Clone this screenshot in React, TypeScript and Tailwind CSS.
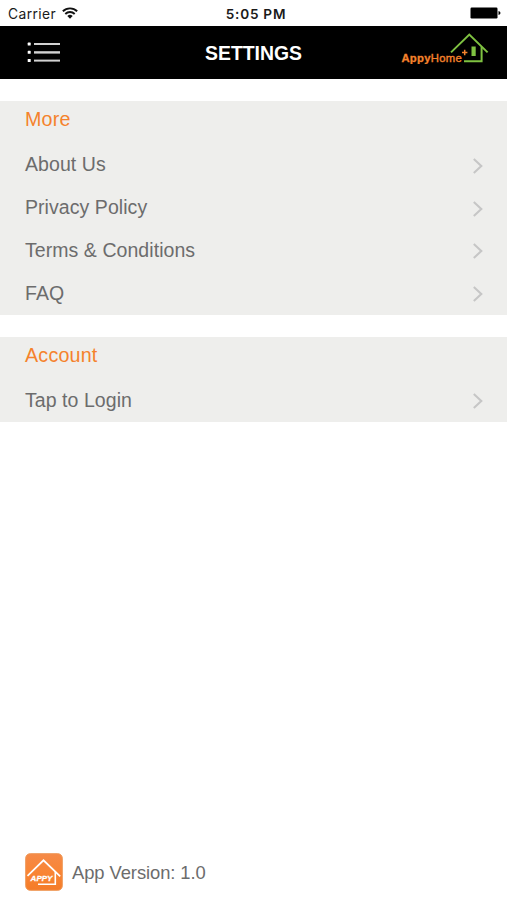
import React from "react";

function Chevron() {
  return (
    <svg className="mt-[2px] h-4 w-3" viewBox="0 0 12 16" fill="none" stroke="#c6c6c6" strokeWidth="2.1">
      <path d="M1.8 1 L9.3 8 L1.8 15" />
    </svg>
  );
}

function Row({ label }: { label: string }) {
  return (
    <li className="flex h-[42.75px] items-center justify-between pr-[23px] pl-[25px]">
      <span className="pb-px text-[19.5px] leading-6 tracking-[0.06px] text-[#6c6c6c]">{label}</span>
      <Chevron />
    </li>
  );
}

function Section({ title, items }: { title: string; items: string[] }) {
  return (
    <section className="bg-[#eeeeec]">
      <h2 className="h-[42.5px] pt-[6px] pl-[25px] text-[19.7px] leading-6 tracking-[0.2px] text-[#f5822c]">{title}</h2>
      <ul>
        {items.map((item) => (
          <Row key={item} label={item} />
        ))}
      </ul>
    </section>
  );
}

function StatusBar() {
  return (
    <div className="grid h-[25.5px] grid-cols-3 items-center pt-[2px] text-[#1a1a1a]">
      <div className="flex items-center gap-[6px] pl-[8px]">
        <span className="font-['Inter','Liberation_Sans',sans-serif] text-[13.8px] leading-4 tracking-[0.4px]">Carrier</span>
        <svg className="mb-[2px] h-[12px] w-[16px]" viewBox="0 0 15 11" fill="none" stroke="#111" strokeWidth="1.8">
          <path d="M0.8 3.9 A9.5 9.5 0 0 1 14.2 3.9" />
          <path d="M3.1 6.4 A6.2 6.2 0 0 1 11.9 6.4" />
          <path d="M7.5 10.9 L5 8.4 A3.5 3.5 0 0 1 10 8.4 Z" fill="#111" stroke="none" />
        </svg>
      </div>
      <div className="pl-[5px] text-center font-['Inter','Liberation_Sans',sans-serif] text-[13.6px] leading-4 font-semibold tracking-[0.75px]">
        5:05 PM
      </div>
      <div className="flex justify-end pr-[6px]">
        <svg className="mb-px h-3 w-[31px]" viewBox="0 0 31 12" fill="#000">
          <rect x="0.5" y="0.5" width="27" height="11" rx="1.2" />
          <path d="M28.5 4 Q30.5 4.5 30.5 6 Q30.5 7.5 28.5 8 Z" />
        </svg>
      </div>
    </div>
  );
}

function MenuIcon() {
  return (
    <svg className="h-[22px] w-[34px]" viewBox="0 0 34 22">
      <g fill="#fff">
        <rect x="0.7" y="1.6" width="3" height="3" rx="0.6" />
        <rect x="0.7" y="9.8" width="3" height="3" rx="0.6" />
        <rect x="0.7" y="18" width="3" height="3" rx="0.6" />
      </g>
      <g fill="#d2d2d2">
        <rect x="7" y="2" width="26" height="2" />
        <rect x="7" y="10.2" width="26" height="2.4" />
        <rect x="7" y="18.6" width="26" height="2" />
      </g>
    </svg>
  );
}

function BrandLogo() {
  return (
    <svg className="h-[34px] w-[90px]" viewBox="0 0 90 34">
      <g fill="none" stroke="#7fc241">
        <path d="M51 22.4 L69.3 4.6 L87.6 22.4" strokeWidth="2" />
        <path d="M81.6 17 V31.3 H64" strokeWidth="2" />
        <rect x="71.5" y="16.5" width="4.2" height="9.5" fill="#7fc241" stroke="none" />
      </g>
      <path d="M64.7 19.8 V25.2 M62 22.5 H67.4" stroke="#f5822c" strokeWidth="1.5" />
      <text x="1.4" y="32" fill="#f5822c" className="font-['Liberation_Sans',Arial,sans-serif] text-[11.3px]" textLength="60.4">
        <tspan className="font-bold" stroke="#f5822c" strokeWidth="0.3">Appy</tspan>
        <tspan stroke="#f5822c" strokeWidth="0.4">Home</tspan>
      </text>
    </svg>
  );
}

function AppIcon() {
  return (
    <svg className="h-[38px] w-[38px]" viewBox="0 0 38 38">
      <defs>
        <linearGradient id="tile" x1="0" y1="0" x2="0" y2="1">
          <stop offset="0" stopColor="#f58a48" />
          <stop offset="0.5" stopColor="#f98534" />
          <stop offset="1" stopColor="#f47b28" />
        </linearGradient>
      </defs>
      <rect x="0.7" y="0.7" width="36.6" height="36.6" rx="4.5" fill="url(#tile)" stroke="#ee9654" strokeWidth="1" />
      <path d="M2.5 22.8 L18.5 7.3 L35.2 23.3" fill="none" stroke="#fff" strokeWidth="1.7" />
      <path d="M30.3 18.8 V31.2 H13" fill="none" stroke="#fff" strokeWidth="1.6" />
      <text
        x="5.6"
        y="27.5"
        fill="#fff"
        stroke="#fff"
        strokeWidth="0.3"
        textLength="21.8"
        className="font-['Liberation_Sans',Arial,sans-serif] text-[8px] font-bold italic"
      >
        APPY
      </text>
    </svg>
  );
}

export default function App() {
  return (
    <div className="flex h-[900px] w-full flex-col bg-white font-['Liberation_Sans',Arial,sans-serif]">
      <StatusBar />
      <header className="grid h-[53.5px] grid-cols-3 items-center bg-black">
        <div className="pl-[27px]">
          <MenuIcon />
        </div>
        <h1 className="pt-[2px] text-center text-[19.4px] leading-6 font-bold text-white">SETTINGS</h1>
        <div className="flex justify-end pr-[17px] pb-[10px]">
          <BrandLogo />
        </div>
      </header>
      <main className="flex flex-1 flex-col gap-[22px] pt-[22px]">
        <Section title="More" items={["About Us", "Privacy Policy", "Terms & Conditions", "FAQ"]} />
        <Section title="Account" items={["Tap to Login"]} />
      </main>
      <footer className="flex items-center gap-[9px] pb-[9px] pl-[25px]">
        <AppIcon />
        <span className="pt-[2px] text-[18.4px] leading-6 tracking-[-0.08px] text-[#6c6c6c]">App Version: 1.0</span>
      </footer>
    </div>
  );
}
